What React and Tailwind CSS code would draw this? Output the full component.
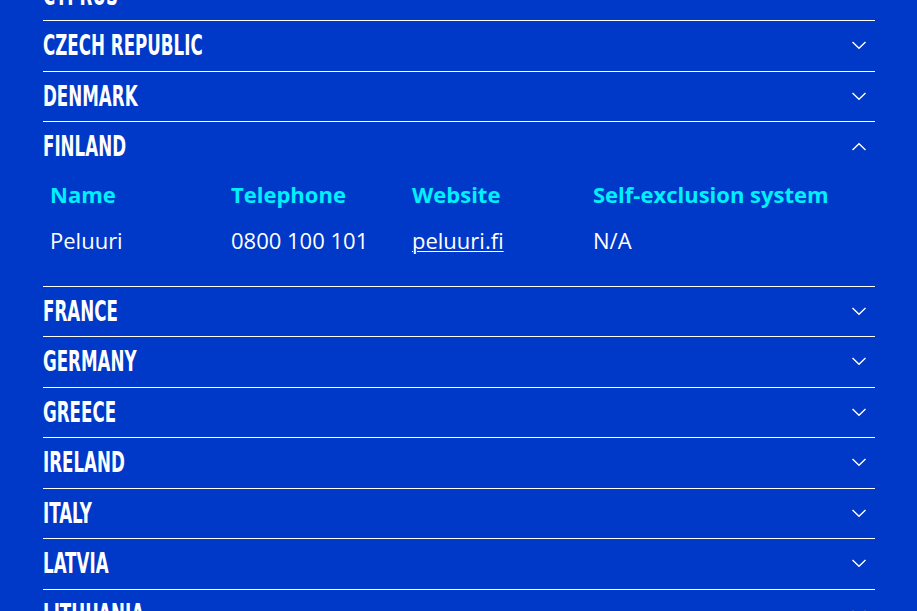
const countries = [
  'Cyprus',
  'Czech Republic',
  'Denmark',
  'Finland',
  'France',
  'Germany',
  'Greece',
  'Ireland',
  'Italy',
  'Latvia',
  'Lithuania',
];

const open = 'Finland';

function Chevron({ up }) {
  return (
    <svg width="16" height="9" viewBox="0 0 16 9" fill="none" className="shrink-0">
      <path
        d={up ? 'M1.5 8L8 1.8L14.5 8' : 'M1.5 1L8 7.2L14.5 1'}
        stroke="white"
        strokeWidth="1.4"
      />
    </svg>
  );
}

function Details() {
  return (
    <div className="pt-[7px] pb-[31px] font-['Open_Sans',sans-serif] text-[22px] leading-[30px]">
      <div className="grid grid-cols-[181px_181px_181px_1fr] pl-[7px]">
        <div className="font-bold text-[#00f0ff]">Name</div>
        <div className="font-bold text-[#00f0ff]">Telephone</div>
        <div className="font-bold text-[#00f0ff]">Website</div>
        <div className="font-bold text-[#00f0ff]">Self-exclusion system</div>
      </div>
      <div className="grid grid-cols-[181px_181px_181px_1fr] pl-[7px] mt-[16px] text-white">
        <div>Peluuri</div>
        <div>0800 100 101</div>
        <div>
          <a href="#" className="underline underline-offset-2 decoration-1">peluuri.fi</a>
        </div>
        <div>N/A</div>
      </div>
    </div>
  );
}

export default function App() {
  return (
    <div className="h-[611px] overflow-hidden bg-[#0038c8]">
      <div className="mx-[43px] w-[832px] mt-[-29.5px]">
        {countries.map((c) => (
          <div key={c} className="border-b border-white">
            <div className="h-[49.5px] flex items-center justify-between pr-[8px]">
              <span className="inline-block origin-left scale-x-[0.64] font-['DejaVu_Sans_Condensed',sans-serif] font-bold text-[29px] uppercase text-white leading-none whitespace-nowrap">
                {c}
              </span>
              <Chevron up={c === open} />
            </div>
            {c === open && <Details />}
          </div>
        ))}
      </div>
    </div>
  );
}
